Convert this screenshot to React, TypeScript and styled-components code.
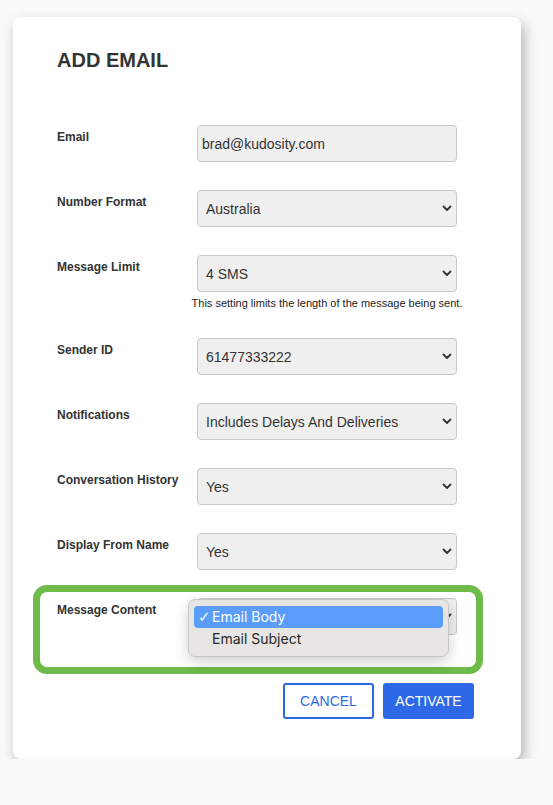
import React from 'react';
import styled, { createGlobalStyle } from 'styled-components';

const blue = '#2d69e6';
const green = '#6dbb4a';
const ink = '#333333';

const GlobalStyle = createGlobalStyle`
  body {
    margin: 0;
    background: #fafafa;
    font-family: "Liberation Sans", Arial, sans-serif;
    color: ${ink};
  }
`;

const Card = styled.div`
  box-sizing: border-box;
  width: 508px;
  margin: 17px 0 0 13px;
  padding: 32px 47px 40px 44px;
  background: #ffffff;
  border-radius: 8px;
  box-shadow: 3px 6px 14px rgba(0, 0, 0, 0.3);
`;

const Title = styled.h2`
  margin: 0 0 53px 0;
  font-size: 20px;
  line-height: 23px;
  font-weight: 700;
  color: ${ink};
`;

const Row = styled.div`
  display: grid;
  grid-template-columns: 140px 260px;
  align-items: start;
  margin-bottom: 28px;
`;

const Label = styled.label`
  padding-top: 5px;
  font-size: 12px;
  font-weight: 700;
  color: ${ink};
`;

const Field = styled.div`
  position: relative;
  display: flex;
  flex-direction: column;
  align-items: center;
`;

const TextInput = styled.input`
  box-sizing: border-box;
  width: 260px;
  height: 37px;
  padding: 0 4px;
  border: 1px solid #c9c9c9;
  border-radius: 4px;
  background: #efefef;
  font-family: "Liberation Sans", Arial, sans-serif;
  font-size: 14px;
  color: ${ink};
  outline: none;
`;

const SelectWrap = styled.div`
  position: relative;
  width: 260px;
  height: 37px;
`;

const Select = styled.select`
  box-sizing: border-box;
  width: 100%;
  height: 37px;
  padding: 0 26px 0 8px;
  appearance: none;
  -webkit-appearance: none;
  border: 1px solid #c9c9c9;
  border-radius: 4px;
  background: #efefef;
  font-family: "Liberation Sans", Arial, sans-serif;
  font-size: 14px;
  color: ${ink};
  outline: none;
`;

const Chevron = styled.svg`
  position: absolute;
  right: 5px;
  top: 15px;
  width: 10px;
  height: 7px;
  pointer-events: none;
`;

const Help = styled.div`
  margin-top: 5px;
  font-size: 11px;
  line-height: 13px;
  white-space: nowrap;
  color: #222222;
`;

const Highlight = styled.div`
  margin: -13px -9px 0 -24px;
  padding: 6px 2px 32px 17px;
  border: 7px solid ${green};
  border-radius: 14px;

  ${Row} {
    margin-bottom: 0;
  }
`;

const Menu = styled.div`
  position: absolute;
  left: -9px;
  top: 1px;
  width: 261px;
  box-sizing: border-box;
  padding: 6px 5px;
  background: rgba(231, 230, 228, 0.98);
  border: 1px solid #c6c6c6;
  border-radius: 7px;
  box-shadow: 0 5px 14px rgba(0, 0, 0, 0.18);
  font-family: Inter, "Noto Sans", sans-serif;
  font-size: 14px;
  z-index: 2;
`;

const MenuItem = styled.div<{ $active?: boolean }>`
  position: relative;
  height: 22px;
  line-height: 22px;
  padding-left: 18px;
  border-radius: 4px;
  color: ${p => (p.$active ? '#ffffff' : '#262626')};
  background: ${p => (p.$active ? '#5b9dfb' : 'transparent')};
`;

const Check = styled.span`
  position: absolute;
  left: 4px;
  top: 0;
  font-family: "DejaVu Sans", sans-serif;
  font-size: 15px;
`;

const Actions = styled.div`
  display: flex;
  justify-content: flex-end;
  gap: 9px;
  margin-top: 9px;
`;

const Button = styled.button<{ $primary?: boolean }>`
  box-sizing: border-box;
  width: 91px;
  height: 36px;
  border-radius: 3px;
  border: 2px solid ${blue};
  background: ${p => (p.$primary ? blue : '#ffffff')};
  color: ${p => (p.$primary ? '#ffffff' : blue)};
  font-family: "Liberation Sans", Arial, sans-serif;
  font-size: 14px;
  cursor: pointer;
`;

const ChevronIcon = () => (
  <Chevron viewBox="0 0 10 7">
    <path d="M1.5 1.5 L5 5 L8.5 1.5" fill="none" stroke="#333" strokeWidth="1.8" strokeLinecap="round" strokeLinejoin="round" />
  </Chevron>
);

interface ISelectProps {
  value: string;
}
const SelectField: React.FC<ISelectProps> = ({ value }) => (
  <SelectWrap>
    <Select defaultValue={value}>
      <option>{value}</option>
    </Select>
    <ChevronIcon />
  </SelectWrap>
);

const selects = [
  { label: 'Sender ID', value: '61477333222' },
  { label: 'Notifications', value: 'Includes Delays And Deliveries' },
  { label: 'Conversation History', value: 'Yes' },
  { label: 'Display From Name', value: 'Yes' },
];

export default function App() {
  return (
    <>
      <GlobalStyle />
      <Card>
        <Title>ADD EMAIL</Title>

        <Row>
          <Label>Email</Label>
          <Field>
            <TextInput defaultValue="brad@kudosity.com" />
          </Field>
        </Row>

        <Row>
          <Label>Number Format</Label>
          <Field>
            <SelectField value="Australia" />
          </Field>
        </Row>

        <Row>
          <Label>Message Limit</Label>
          <Field>
            <SelectField value="4 SMS" />
            <Help>This setting limits the length of the message being sent.</Help>
          </Field>
        </Row>

        {selects.map(s => (
          <Row key={s.label}>
            <Label>{s.label}</Label>
            <Field>
              <SelectField value={s.value} />
            </Field>
          </Row>
        ))}

        <Highlight>
          <Row>
            <Label>Message Content</Label>
            <Field>
              <SelectField value="Email Body" />
              <Menu>
                <MenuItem $active>
                  <Check>✓</Check>
                  Email Body
                </MenuItem>
                <MenuItem>Email Subject</MenuItem>
              </Menu>
            </Field>
          </Row>
        </Highlight>

        <Actions>
          <Button>CANCEL</Button>
          <Button $primary>ACTIVATE</Button>
        </Actions>
      </Card>
    </>
  );
}
